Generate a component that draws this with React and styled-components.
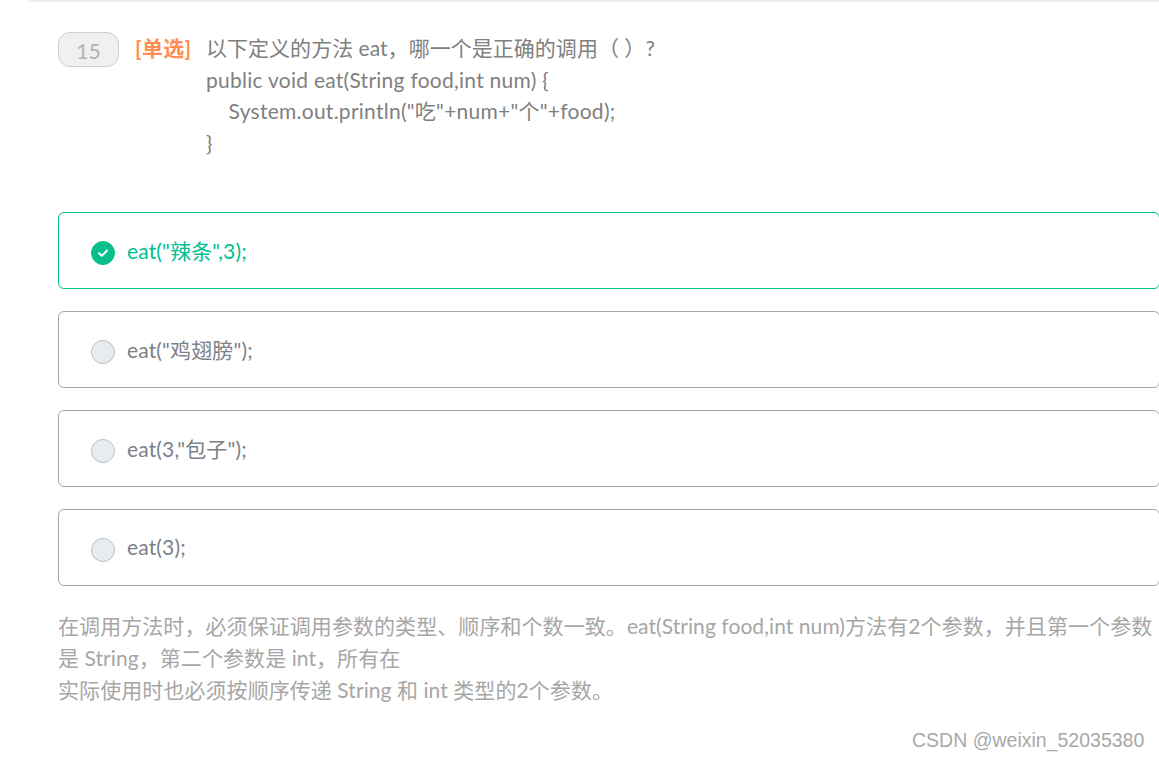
import React from "react";
import styled, { createGlobalStyle } from "styled-components";

const GlobalStyle = createGlobalStyle`
  html, body {
    margin: 0;
    padding: 0;
    background: #fff;
    overflow: hidden;
  }
  body {
    font-family: Lato, "Noto Sans CJK SC", sans-serif;
  }
`;

const Page = styled.div`
  position: relative;
  width: 1159px;
  height: 759px;
  overflow: hidden;
`;

const Wrap = styled.div`
  margin-left: 28px;
  border-top: 2px solid #f0f0f0;
  padding: 30px 0 0 30px;
  width: 1102px;
`;

const Question = styled.div`
  display: flex;
  align-items: flex-start;
  height: 180px;
`;

const Num = styled.div`
  box-sizing: border-box;
  width: 61px;
  height: 35px;
  border: 1px solid #cfcdcf;
  border-radius: 12px;
  background: #f0f0f0;
  color: #b5b0ba;
  font-size: 21px;
  line-height: 35px;
  text-align: center;
`;

const Kind = styled.div`
  margin-left: 16px;
  width: 72px;
  color: #ff8c50;
  font-size: 21px;
  font-weight: 700;
  line-height: 32px;
  letter-spacing: 0.3px;
`;

const Stem = styled.div`
  margin-left: -1px;
  color: #808080;
  font-size: 21px;
  line-height: 31.5px;
  white-space: pre;
`;

const CodeLine = styled.div`
  letter-spacing: ${(p) => (p.$code ? "0.26px" : "0.03px")};
`;

const Options = styled.div`
  display: flex;
  flex-direction: column;
  gap: 22px;
`;

const Option = styled.div`
  box-sizing: border-box;
  display: flex;
  align-items: center;
  height: 77px;
  padding-left: 32px;
  border: 1px solid ${(p) => (p.$on ? "#00c08f" : "#a6a6a6")};
  border-radius: 6px;
  color: ${(p) => (p.$on ? "#00c08f" : "#7b8188")};
  font-size: 21px;
  letter-spacing: 0.15px;
`;

const OptionText = styled.span`
  margin-bottom: 2px;
`;

const Dot = styled.span`
  box-sizing: border-box;
  display: flex;
  align-items: center;
  justify-content: center;
  width: 24px;
  height: 24px;
  margin: 4px 12px 0 0;
  border-radius: 50%;
  border: 1px solid ${(p) => (p.$on ? "#0abf8c" : "#b8bfc8")};
  background: ${(p) => (p.$on ? "#0abf8c" : "#e9ecef")};
`;

const Explain = styled.div`
  margin-top: 24px;
  color: #a6a6a6;
  font-size: 21px;
  line-height: 32px;
  letter-spacing: 0.07px;
  white-space: pre;
`;

const Mark = styled.div`
  position: absolute;
  left: 912px;
  top: 729px;
  color: #a8a8a8;
  font-family: "Liberation Sans", sans-serif;
  font-size: 19.5px;
  line-height: 22px;
`;

const options = [
  { text: 'eat("辣条",3);', on: true },
  { text: 'eat("鸡翅膀");' },
  { text: 'eat(3,"包子");' },
  { text: "eat(3);" },
];

export default function App() {
  return (
    <Page>
      <GlobalStyle />
      <Wrap>
        <Question>
          <Num>15</Num>
          <Kind>[单选]</Kind>
          <Stem>
            <CodeLine>以下定义的方法 eat，哪一个是正确的调用（ ）?</CodeLine>
            <CodeLine $code>{"public void eat(String food,int num) {"}</CodeLine>
            <CodeLine $code>{'    System.out.println("吃"+num+"个"+food);'}</CodeLine>
            <CodeLine $code>{"}"}</CodeLine>
          </Stem>
        </Question>
        <Options>
          {options.map((o) => (
            <Option key={o.text} $on={o.on}>
              <Dot $on={o.on}>
                {o.on && (
                  <svg width="12" height="10" viewBox="0 0 12 10" fill="none">
                    <path d="M2 5.2l2.8 2.6L10 2.6" stroke="#fff" strokeWidth="2" strokeLinecap="round" strokeLinejoin="round" />
                  </svg>
                )}
              </Dot>
              <OptionText>{o.text}</OptionText>
            </Option>
          ))}
        </Options>
        <Explain>
          {"在调用方法时，必须保证调用参数的类型、顺序和个数一致。eat(String food,int num)方法有2个参数，并且第一个参数\n是 String，第二个参数是 int，所有在\n实际使用时也必须按顺序传递 String 和 int 类型的2个参数。"}
        </Explain>
      </Wrap>
      <Mark>CSDN @weixin_52035380</Mark>
    </Page>
  );
}
